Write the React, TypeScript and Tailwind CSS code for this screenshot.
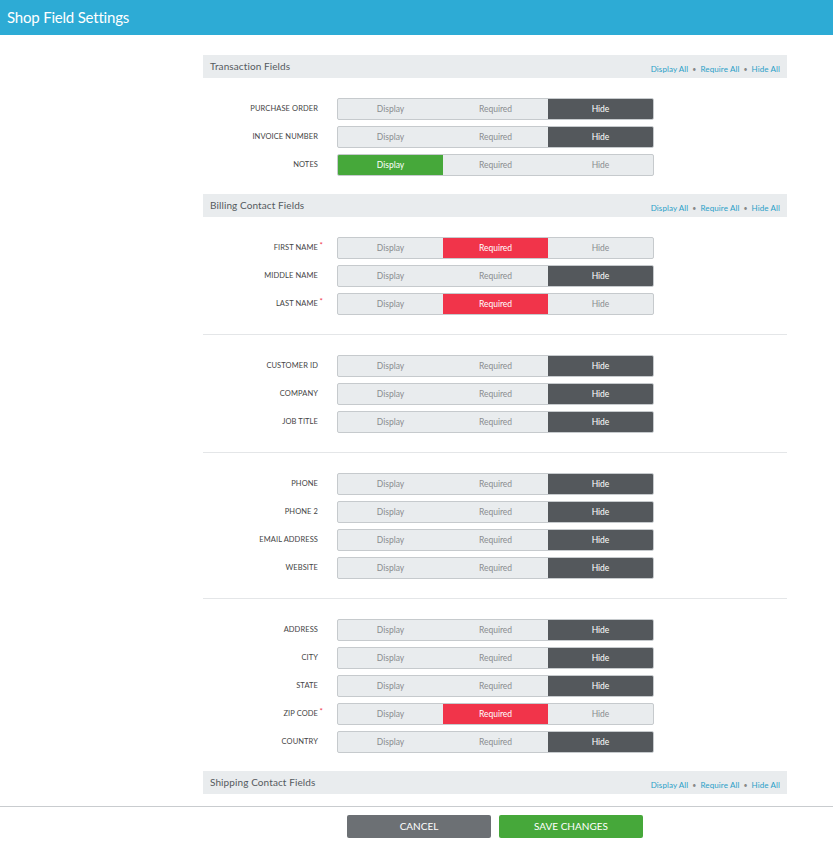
import React from 'react'

type Mode = 'display' | 'required' | 'hide'
type Field = { label: string; mode: Mode; star?: boolean }

const SECTIONS: { title?: string; groups: Field[][] }[] = [
  {
    title: 'Transaction Fields',
    groups: [
      [
        { label: 'PURCHASE ORDER', mode: 'hide' },
        { label: 'INVOICE NUMBER', mode: 'hide' },
        { label: 'NOTES', mode: 'display' },
      ],
    ],
  },
  {
    title: 'Billing Contact Fields',
    groups: [
      [
        { label: 'FIRST NAME', mode: 'required', star: true },
        { label: 'MIDDLE NAME', mode: 'hide' },
        { label: 'LAST NAME', mode: 'required', star: true },
      ],
      [
        { label: 'CUSTOMER ID', mode: 'hide' },
        { label: 'COMPANY', mode: 'hide' },
        { label: 'JOB TITLE', mode: 'hide' },
      ],
      [
        { label: 'PHONE', mode: 'hide' },
        { label: 'PHONE 2', mode: 'hide' },
        { label: 'EMAIL ADDRESS', mode: 'hide' },
        { label: 'WEBSITE', mode: 'hide' },
      ],
      [
        { label: 'ADDRESS', mode: 'hide' },
        { label: 'CITY', mode: 'hide' },
        { label: 'STATE', mode: 'hide' },
        { label: 'ZIP CODE', mode: 'required', star: true },
        { label: 'COUNTRY', mode: 'hide' },
      ],
    ],
  },
  { title: 'Shipping Contact Fields', groups: [] },
]

const SEGS: { key: Mode; text: string; on: string }[] = [
  { key: 'display', text: 'Display', on: 'bg-[#46a83a] text-white' },
  { key: 'required', text: 'Required', on: 'bg-[#f1344a] text-white' },
  { key: 'hide', text: 'Hide', on: 'bg-[#54585c] text-white' },
]

function SectionHeader({ title }: { title: string }) {
  return (
    <div className="h-[23px] bg-[#e9ecee] flex items-center justify-between pl-[7px] pr-[7px]">
      <span className="text-[10px] text-[#555a5e] tracking-[0.1px]">{title}</span>
      <span className="text-[8px] text-[#2aa0c8] flex items-center gap-[4px] pt-[5px] tracking-[0.1px]">
        <span>Display All</span>
        <span className="text-[#888] text-[7px]">•</span>
        <span>Require All</span>
        <span className="text-[#888] text-[7px]">•</span>
        <span>Hide All</span>
      </span>
    </div>
  )
}

function Row({ f }: { f: Field }) {
  return (
    <div className="flex items-center h-[22px]">
      <div className="w-[115px] text-right text-[7.5px] text-[#444] relative tracking-[0.1px]">
        {f.label}
        {f.star && <span className="absolute -right-[5px] -top-[3px] text-[#f1344a] text-[8px]">*</span>}
      </div>
      <div className="ml-[19px] w-[317px] h-[22px] grid grid-cols-3 rounded-[2px] border border-[#c6cacd] bg-[#e9ecee] overflow-hidden">
        {SEGS.map((s) => (
          <div
            key={s.key}
            className={`flex items-center justify-center text-[8.5px] ${
              f.mode === s.key ? s.on : 'text-[#8a8d90]'
            }`}
          >
            {s.text}
          </div>
        ))}
      </div>
    </div>
  )
}

export default function App() {
  return (
    <div className="h-[845px] flex flex-col bg-white overflow-hidden" style={{ fontFamily: 'Lato, "Liberation Sans", sans-serif' }}>
      <div className="h-[35px] shrink-0 bg-[#2dabd5] flex items-center pl-[7px]">
        <span className="text-white text-[15px] tracking-[-0.2px]">Shop Field Settings</span>
      </div>

      <div className="flex-1 overflow-hidden">
        <div className="ml-[203px] w-[584px] pt-[20px]">
          {SECTIONS.map((sec, i) => (
            <div key={i} className="mb-[18px]">
              {sec.title && <SectionHeader title={sec.title} />}
              {sec.groups.map((g, gi) => (
                <div key={gi}>
                  {gi > 0 && <div className="border-t border-[#e4e6e8] mt-[19px]" />}
                  <div className="flex flex-col gap-[6px] pt-[20px]">
                    {g.map((f) => (
                      <Row key={f.label} f={f} />
                    ))}
                  </div>
                </div>
              ))}
            </div>
          ))}
        </div>
      </div>

      <div className="h-[39px] shrink-0 border-t border-[#c9cccf] bg-white">
        <div className="ml-[203px] w-[584px] flex justify-center gap-[8px] pt-[8px]">
          <button className="w-[144px] h-[23px] rounded-[2px] bg-[#6c7074] text-white text-[10px]">CANCEL</button>
          <button className="w-[144px] h-[23px] rounded-[2px] bg-[#46a83a] text-white text-[10px]">SAVE CHANGES</button>
        </div>
      </div>
    </div>
  )
}
